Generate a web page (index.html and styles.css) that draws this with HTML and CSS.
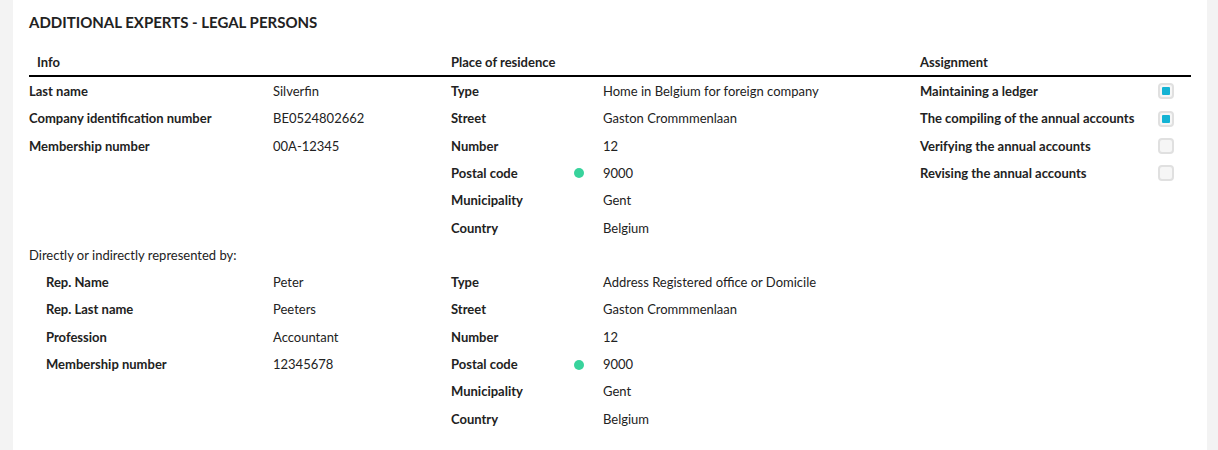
FILE: index.html
```html
<!DOCTYPE html>
<html lang="en">
<head>
<meta charset="utf-8">
<title>Additional experts - legal persons</title>
<link rel="stylesheet" href="styles.css">
</head>
<body>
<div class="page">
  <div class="panel">
    <h2 class="title">ADDITIONAL EXPERTS - LEGAL PERSONS</h2>
    <div class="grid head">
      <div class="hcell hinfo">Info</div>
      <div class="hcell">Place of residence</div>
      <div class="hcell">Assignment</div>
    </div>
    <div class="grid first">
      <div class="col">
        <div class="row info"><span class="lbl">Last name</span><span class="val">Silverfin</span></div>
        <div class="row info"><span class="lbl">Company identification number</span><span class="val">BE0524802662</span></div>
        <div class="row info"><span class="lbl">Membership number</span><span class="val">00A-12345</span></div>
      </div>
      <div class="col">
        <div class="row place"><span class="lbl">Type</span><span></span><span class="val">Home in Belgium for foreign company</span></div>
        <div class="row place"><span class="lbl">Street</span><span></span><span class="val">Gaston Crommmenlaan</span></div>
        <div class="row place"><span class="lbl">Number</span><span></span><span class="val">12</span></div>
        <div class="row place"><span class="lbl">Postal code</span><span class="dot"></span><span class="val">9000</span></div>
        <div class="row place"><span class="lbl">Municipality</span><span></span><span class="val">Gent</span></div>
        <div class="row place"><span class="lbl">Country</span><span></span><span class="val">Belgium</span></div>
      </div>
      <div class="col">
        <div class="row assign"><span class="lbl">Maintaining a ledger</span><span class="cb on"></span></div>
        <div class="row assign"><span class="lbl">The compiling of the annual accounts</span><span class="cb on"></span></div>
        <div class="row assign"><span class="lbl">Verifying the annual accounts</span><span class="cb"></span></div>
        <div class="row assign"><span class="lbl">Revising the annual accounts</span><span class="cb"></span></div>
      </div>
    </div>
    <div class="row note">Directly or indirectly represented by:</div>
    <div class="grid">
      <div class="col">
        <div class="row info rep"><span class="lbl">Rep. Name</span><span class="val">Peter</span></div>
        <div class="row info rep"><span class="lbl">Rep. Last name</span><span class="val">Peeters</span></div>
        <div class="row info rep"><span class="lbl">Profession</span><span class="val">Accountant</span></div>
        <div class="row info rep"><span class="lbl">Membership number</span><span class="val">12345678</span></div>
      </div>
      <div class="col">
        <div class="row place"><span class="lbl">Type</span><span></span><span class="val">Address Registered office or Domicile</span></div>
        <div class="row place"><span class="lbl">Street</span><span></span><span class="val">Gaston Crommmenlaan</span></div>
        <div class="row place"><span class="lbl">Number</span><span></span><span class="val">12</span></div>
        <div class="row place"><span class="lbl">Postal code</span><span class="dot"></span><span class="val">9000</span></div>
        <div class="row place"><span class="lbl">Municipality</span><span></span><span class="val">Gent</span></div>
        <div class="row place"><span class="lbl">Country</span><span></span><span class="val">Belgium</span></div>
      </div>
      <div class="col"></div>
    </div>
  </div>
</div>
</body>
</html>
```

FILE: styles.css
```css
* { box-sizing: border-box; }
html, body { margin: 0; padding: 0; }
body {
  background: #f3f3f3;
  font-family: Lato, "Open Sans", "Liberation Sans", sans-serif;
  color: #222;
  font-size: 13px;
}
.page {
  padding: 0 11px 0 13px;
  height: 450px;
  overflow: hidden;
}
.panel {
  background: #fff;
  padding: 12px 16px 40px 16px;
  min-height: 450px;
}
.title {
  margin: 0;
  font-size: 15px;
  font-weight: 700;
  line-height: 21px;
  letter-spacing: 0;
}
.grid {
  display: grid;
  grid-template-columns: 422px 469px 271px;
}
.head {
  margin-top: 20.5px;
  border-bottom: 2px solid #000;
}
.hcell {
  font-weight: 700;
  font-size: 13px;
  line-height: 17px;
  padding-bottom: 4.5px;
}
.hinfo { padding-left: 8px; }
.first { padding-top: 0.6px; }
.col { display: flex; flex-direction: column; }
.row {
  height: 27.4px;
  display: grid;
  align-items: center;
  line-height: 17px;
}
.lbl { font-weight: 700; }
.info { grid-template-columns: 244px 1fr; }
.info.rep { grid-template-columns: 227px 1fr; padding-left: 17px; }
.place { grid-template-columns: 123px 29px 1fr; }
.assign { grid-template-columns: 1fr 16px; padding-right: 17px; }
.note { display: flex; height: 26.8px; }
.dot {
  width: 10px;
  height: 10px;
  border-radius: 50%;
  background: #38d39c;
}
.cb {
  width: 16px;
  height: 16px;
  border: 2px solid #e0e0e0;
  border-radius: 4px;
  background: #f6f6f6;
  display: flex;
  align-items: center;
  justify-content: center;
}
.cb.on::after {
  content: "";
  width: 8px;
  height: 8px;
  border-radius: 1px;
  background: #13b3d4;
}
```
